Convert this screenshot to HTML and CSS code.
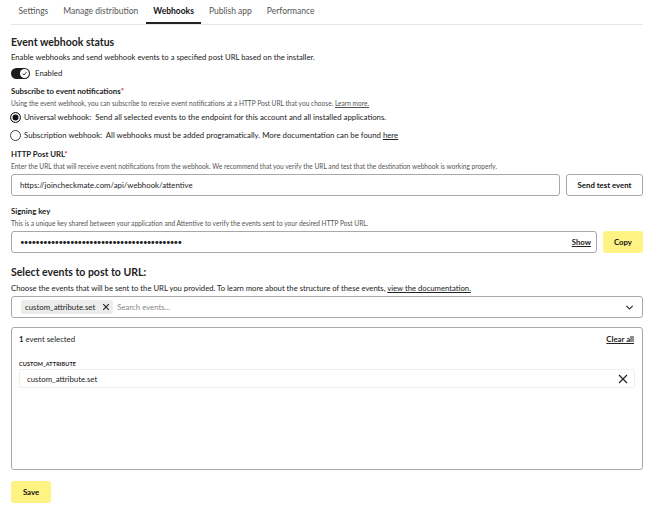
FILE: index.html
```html
<!DOCTYPE HTML>
<html>
<head>
<meta charset="UTF-8">
<meta name="viewport" content="width=device-width, initial-scale=1">
<link rel="stylesheet" href="styles.css">
</head>
<body>

<!-- Tabs -->
<nav class="tabs">
    <a class="tab">Settings</a>
    <a class="tab">Manage distribution</a>
    <a class="tab active">Webhooks</a>
    <a class="tab">Publish app</a>
    <a class="tab">Performance</a>
</nav>

<div class="page">
    <h2 class="section-title">Event webhook status</h2>
    <p class="desc first">Enable webhooks and send webhook events to a specified post URL based on the installer.</p>

    <div class="toggle-row">
        <span class="toggle">
            <span class="knob">
                <svg width="7" height="7" viewBox="0 0 10 10"><path d="M2.5 5.2 L4.3 7 L7.8 3.2" fill="none" stroke="#111" stroke-width="1.3"/></svg>
            </span>
        </span>
        <span>Enabled</span>
    </div>

    <h4 class="label">Subscribe to event notifications<span class="req">*</span></h4>
    <p class="hint">Using the event webhook, you can subscribe to receive event notifications at a HTTP Post URL that you choose. <a class="link">Learn more.</a></p>

    <div class="radio-row">
        <span class="radio checked"></span>
        <span>Universal webhook:&nbsp; Send all selected events to the endpoint for this account and all installed applications.</span>
    </div>
    <div class="radio-row">
        <span class="radio"></span>
        <span>Subscription webhook:&nbsp; All webhooks must be added programatically. More documentation can be found <a class="link">here</a></span>
    </div>

    <h4 class="label after-radio">HTTP Post URL<span class="req">*</span></h4>
    <p class="hint">Enter the URL that will receive event notifications from the webhook. We recommend that you verify the URL and test that the destination webhook is working properly.</p>
    <div class="field-row">
        <div class="input">https://joincheckmate.com/api/webhook/attentive</div>
        <button class="btn btn-outline">Send test event</button>
    </div>

    <h4 class="label after-field">Signing key</h4>
    <p class="hint">This is a unique key shared between your application and Attentive to verify the events sent to your desired HTTP Post URL.</p>
    <div class="field-row">
        <div class="input">
            <span class="dots">••••••••••••••••••••••••••••••••••••••••••</span>
            <a class="link show">Show</a>
        </div>
        <button class="btn btn-yellow">Copy</button>
    </div>

    <h2 class="section-title second">Select events to post to URL:</h2>
    <p class="desc">Choose the events that will be sent to the URL you provided. To learn more about the structure of these events, <a class="link">view the documentation.</a></p>

    <div class="select">
        <span class="chip">custom_attribute.set
            <svg width="8" height="8" viewBox="0 0 10 10"><path d="M1.5 1.5 L8.5 8.5 M8.5 1.5 L1.5 8.5" stroke="#222" stroke-width="1.4"/></svg>
        </span>
        <span class="placeholder">Search events...</span>
        <svg class="chevron" width="9" height="9" viewBox="0 0 10 10"><path d="M1.5 3.2 L5 6.7 L8.5 3.2" fill="none" stroke="#222" stroke-width="1.2"/></svg>
    </div>

    <div class="selected-box">
        <div class="selected-head">
            <span><b>1</b> event selected</span>
            <a class="link clear">Clear all</a>
        </div>
        <div class="group-name">CUSTOM_ATTRIBUTE</div>
        <div class="event-item">
            <span>custom_attribute.set</span>
            <svg width="10" height="10" viewBox="0 0 10 10"><path d="M1 1 L9 9 M9 1 L1 9" stroke="#222" stroke-width="1.2"/></svg>
        </div>
    </div>

    <button class="btn btn-yellow save">Save</button>
</div>

</body>
</html>
```

FILE: styles.css
```css
html, body {
    margin: 0;
    padding: 0;
    font-family: Lato, "Noto Sans", sans-serif;
    color: #222;
    background-color: white;
}

body {
    padding: 0 27px 0 11px;
}

.tabs {
    display: flex;
    height: 24px;
    border-bottom: 1px solid #e6e6e6;
}

.tab {
    padding: 6px 7.5px 0 7.5px;
    font-size: 8.5px;
    color: #555;
    box-sizing: border-box;
    height: 24px;
}
.tab.active {
    color: #111;
    font-weight: bold;
    border-bottom: 2px solid #222;
}

.section-title {
    font-size: 10.5px;
    font-weight: 700;
    margin: 10px 0 0 0;
    line-height: 14px;
}
.section-title.second {
    margin-top: 12px;
}

.desc {
    font-size: 7.7px;
    margin: 4px 0 0 0;
    line-height: 11px;
}
.desc.first {
    margin-top: 3px;
}

.toggle-row {
    display: flex;
    align-items: center;
    gap: 5px;
    font-size: 7.8px;
    margin-top: 4px;
    height: 12px;
}

.toggle {
    display: flex;
    justify-content: flex-end;
    align-items: center;
    width: 19px;
    height: 11px;
    border-radius: 6px;
    background-color: #1b1b1b;
}
.knob {
    display: flex;
    align-items: center;
    justify-content: center;
    width: 9px;
    height: 9px;
    margin-right: 1px;
    border-radius: 50%;
    background-color: white;
}

.label {
    font-size: 7.8px;
    font-weight: bold;
    margin: 7px 0 0 0;
    line-height: 11px;
}
.label.after-radio {
    margin-top: 8px;
}
.label.after-field {
    margin-top: 10px;
}
.req {
    color: #d0312d;
}

.hint {
    font-size: 6.6px;
    color: #555;
    margin: 2px 0 0 0;
    line-height: 9px;
}

.link {
    text-decoration: underline;
    color: inherit;
}

.radio-row {
    display: flex;
    align-items: center;
    gap: 3px;
    font-size: 7.8px;
    height: 12px;
    margin-top: 3px;
    margin-left: -1px;
}
.radio-row + .radio-row {
    margin-top: 6px;
}

.radio {
    box-sizing: border-box;
    width: 11px;
    height: 11px;
    border: 1px solid #444;
    border-radius: 50%;
    background-color: white;
}
.radio.checked {
    border: 1.5px solid #111;
    box-shadow: inset 0 0 0 1.5px white, inset 0 0 0 5px #111;
}

.field-row {
    display: flex;
    gap: 6px;
    margin-top: 3px;
}

.input {
    flex: 1;
    display: flex;
    align-items: center;
    height: 22px;
    box-sizing: border-box;
    padding: 0 8px;
    border: 1px solid #a8a8a8;
    border-radius: 3px;
    font-size: 7.8px;
}
.dots {
    flex: 1;
    font-size: 8px;
    letter-spacing: -0.8px;
}
.show {
    font-weight: bold;
    margin-right: -3px;
}

.btn {
    font-family: inherit;
    height: 22px;
    box-sizing: border-box;
    border-radius: 3px;
    font-size: 7.8px;
    font-weight: bold;
    padding: 0 8px;
    color: #111;
}
.btn-outline {
    width: 77px;
    border: 1px solid #a8a8a8;
    background-color: white;
}
.btn-yellow {
    width: 40px;
    border: none;
    background-color: #fff383;
}

.select {
    display: flex;
    align-items: center;
    height: 22px;
    box-sizing: border-box;
    margin-top: 2px;
    padding: 0 8px 0 9px;
    border: 1px solid #a8a8a8;
    border-radius: 3px;
    font-size: 7.8px;
}
.chip {
    display: flex;
    align-items: center;
    gap: 7px;
    height: 14px;
    padding: 0 3px 0 4px;
    background-color: #ececec;
    border-radius: 2px;
}
.placeholder {
    flex: 1;
    color: #888;
    margin-left: 4px;
}

.selected-box {
    height: 143px;
    box-sizing: border-box;
    margin-top: 9px;
    padding: 5px 7px 0 7px;
    border: 1px solid #a8a8a8;
    border-radius: 3px;
}
.selected-head {
    display: flex;
    justify-content: space-between;
    font-size: 7.8px;
    line-height: 12px;
}
.clear {
    font-weight: bold;
    margin-right: 1px;
}
.group-name {
    font-size: 5.5px;
    font-weight: bold;
    margin-top: 16px;
    letter-spacing: 0.1px;
}
.event-item {
    display: flex;
    align-items: center;
    justify-content: space-between;
    height: 19px;
    box-sizing: border-box;
    margin-top: 2px;
    padding: 0 6px 0 7px;
    border: 1px solid #efefef;
    border-radius: 2px;
    font-size: 7.8px;
}

.save {
    margin-top: 11px;
}
```
